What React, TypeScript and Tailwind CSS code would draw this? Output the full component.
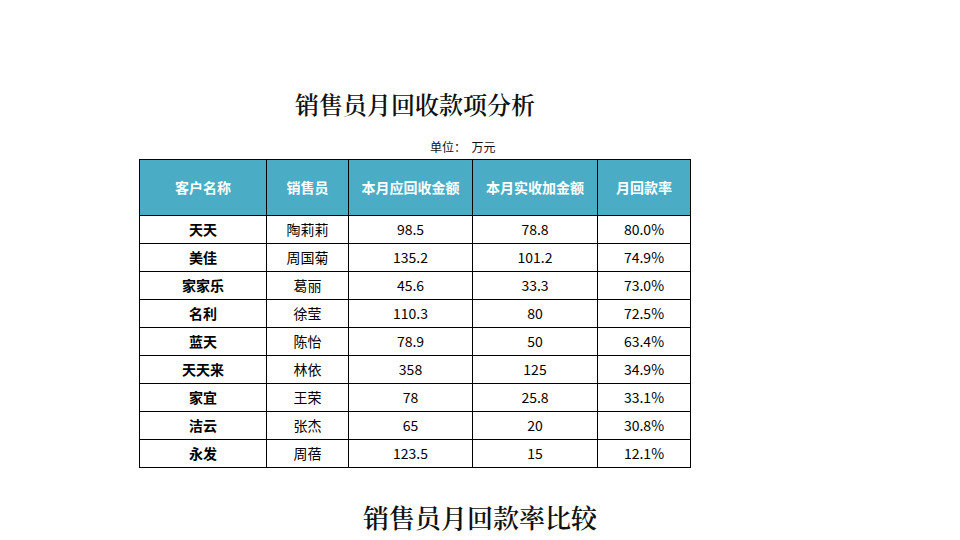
const rows = [
  { name: "天天", rep: "陶莉莉", due: "98.5", got: "78.8", rate: "80.0%" },
  { name: "美佳", rep: "周国菊", due: "135.2", got: "101.2", rate: "74.9%" },
  { name: "家家乐", rep: "葛丽", due: "45.6", got: "33.3", rate: "73.0%" },
  { name: "名利", rep: "徐莹", due: "110.3", got: "80", rate: "72.5%" },
  { name: "蓝天", rep: "陈怡", due: "78.9", got: "50", rate: "63.4%" },
  { name: "天天来", rep: "林依", due: "358", got: "125", rate: "34.9%" },
  { name: "家宜", rep: "王荣", due: "78", got: "25.8", rate: "33.1%" },
  { name: "洁云", rep: "张杰", due: "65", got: "20", rate: "30.8%" },
  { name: "永发", rep: "周蓓", due: "123.5", got: "15", rate: "12.1%" },
];

const headers = ["客户名称", "销售员", "本月应回收金额", "本月实收加金额", "月回款率"];
const widths = ["w-[127px]", "w-[82px]", "w-[124px]", "w-[125px]", "w-[93px]"];

const sans = "font-['Noto_Sans_CJK_SC','Noto_Sans',sans-serif]";
const serif = "font-['Noto_Serif_CJK_SC','Noto_Sans_CJK_SC',serif]";

export default function App() {
  return (
    <div className={`w-[960px] h-[540px] overflow-hidden bg-white text-black ${sans}`}>
      <div className="ml-[139px] w-[552px] pt-[88px]">
        <h1 className={`text-center text-[24px] leading-[32px] font-semibold text-[#111] ${serif}`}>
          销售员月回收款项分析
        </h1>
        <div className="pl-[291px] mt-[20px] text-[12px] leading-[14px] text-[#111]">
          单位：&nbsp; 万元
        </div>
        <table className="mt-[5px] border-collapse table-fixed w-[552px]">
          <thead>
            <tr className="h-[56px] bg-[#4bacc6]">
              {headers.map((h, i) => (
                <th key={h} className={`${widths[i]} border border-black text-white text-[14px] font-bold text-center p-0`}>
                  {h}
                </th>
              ))}
            </tr>
          </thead>
          <tbody>
            {rows.map((r) => (
              <tr key={r.name} className="h-[28px] text-[14px] text-center">
                <td className="border border-black font-bold p-0">{r.name}</td>
                <td className="border border-black p-0">{r.rep}</td>
                <td className="border border-black p-0">{r.due}</td>
                <td className="border border-black p-0">{r.got}</td>
                <td className="border border-black p-0">{r.rate}</td>
              </tr>
            ))}
          </tbody>
        </table>
      </div>
      <h2 className={`mt-[32px] text-center text-[26px] leading-[34px] font-semibold text-[#111] ${serif}`}>
        销售员月回款率比较
      </h2>
    </div>
  );
}
